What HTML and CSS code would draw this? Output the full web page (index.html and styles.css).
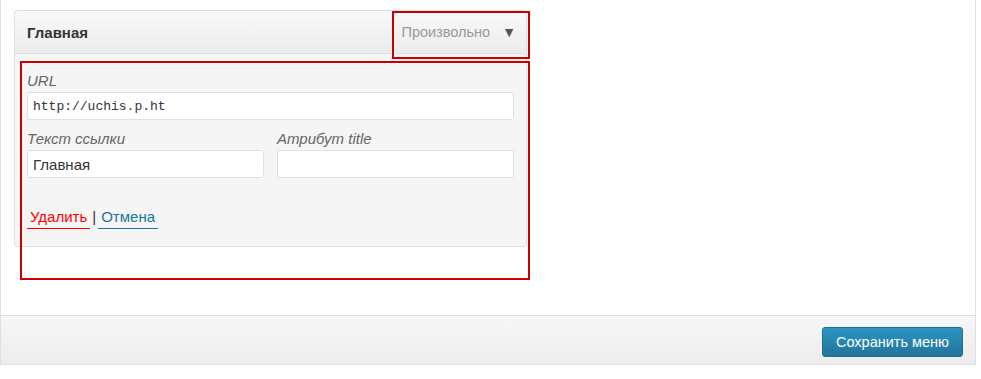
FILE: index.html
```html
<!DOCTYPE html>
<html lang="ru">
<head>
<meta charset="utf-8">
<title>Меню</title>
<link rel="stylesheet" href="styles.css">
</head>
<body>

<div class="menu-frame">
	<div class="menu-body">
		<div class="menu-item">
			<div class="item-bar">
				<span class="item-title">Главная</span>
				<span class="item-controls">
					<span class="item-type">Произвольно</span>
					<span class="item-edit">&#9660;</span>
				</span>
			</div>
			<div class="item-settings">
				<label class="field">
					<span class="field-label">URL</span>
					<input class="field-input field-code" type="text" value="http://uchis.p.ht">
				</label>
				<div class="field-row">
					<label class="field">
						<span class="field-label">Текст ссылки</span>
						<input class="field-input" type="text" value="Главная">
					</label>
					<label class="field">
						<span class="field-label">Атрибут title</span>
						<input class="field-input" type="text" value="">
					</label>
				</div>
				<div class="item-actions">
					<a class="action action-delete" href="#">Удалить</a><span class="sep">|</span><a class="action action-cancel" href="#">Отмена</a>
				</div>
			</div>
		</div>
		<span class="mark mark-type"></span>
		<span class="mark mark-settings"></span>
	</div>
	<div class="menu-footer">
		<button class="button-primary" type="button">Сохранить меню</button>
	</div>
</div>

</body>
</html>
```

FILE: styles.css
```css
body {
	margin:0;
	background:#fff;
	font-family:"Liberation Sans", Arial, sans-serif;
	font-size:15px;
	color:#333;
}

.menu-frame {
	width:976px;
	box-sizing:border-box;
	border:1px solid #dfdfdf;
	border-top:0;
}
.menu-body {
	position:relative;
	padding:10px 13px 68px;
}

/* пункт меню */
.menu-item {
	width:513px;
	box-sizing:border-box;
	border:1px solid #dfdfdf;
	border-radius:3px;
	background:#f5f5f5;
}
.item-bar {
	display:flex;
	align-items:center;
	justify-content:space-between;
	height:42px;
	padding:0 10px 0 12px;
	border-bottom:1px solid #dfdfdf;
	border-radius:3px 3px 0 0;
	background:linear-gradient(to bottom, #f9f9f9, #ececec);
}
.item-title {
	font-weight:bold;
	font-size:15px;
	color:#333;
}
.item-controls {
	display:flex;
	align-items:center;
	gap:12px;
}
.item-type {
	font-size:14.5px;
	color:#999;
}
.item-edit {
	font-size:14px;
	color:#555;
}

.item-settings {
	display:flex;
	flex-direction:column;
	padding:18px 12px 20px;
}
.field {
	display:flex;
	flex-direction:column;
	gap:2px;
	flex:1;
}
.field-row {
	display:flex;
	gap:13px;
	margin-top:10px;
}
.field-label {
	font-style:italic;
	color:#666;
	line-height:18px;
}
.field-input {
	height:28px;
	box-sizing:border-box;
	margin:0;
	padding:0 5px;
	border:1px solid #dfdfdf;
	border-radius:3px;
	background:#fff;
	font-family:"Liberation Sans", Arial, sans-serif;
	font-size:15px;
	color:#333;
}
.field-code {
	font-family:"Liberation Mono", "DejaVu Sans Mono", monospace;
	font-size:13px;
}

.item-actions {
	margin-top:30px;
	line-height:18px;
}
.action {
	padding:0 3px 3px;
	text-decoration:none;
	border-bottom:1px solid;
}
.action-delete { color:#f00; border-color:#f00; }
.action-cancel { color:#21759b; border-color:#21759b; }
.sep {
	margin:0 2px;
	color:#333;
}

/* выделение на скриншоте */
.mark {
	position:absolute;
	box-sizing:border-box;
	border:2px solid #c00;
}
.mark-type { left:391px; top:11px; width:138px; height:48px; }
.mark-settings { left:19px; top:61px; width:510px; height:219px; }

.menu-footer {
	display:flex;
	justify-content:flex-end;
	height:49px;
	box-sizing:border-box;
	padding:11px 12px 0;
	border-top:1px solid #dfdfdf;
	background:linear-gradient(to bottom, #f7f7f7, #ececec);
}
.button-primary {
	height:30px;
	padding:0 13px;
	border:1px solid #1f6d91;
	border-radius:3px;
	background:linear-gradient(to bottom, #2a95c5, #21759b);
	color:#fff;
	font-family:"Liberation Sans", Arial, sans-serif;
	font-size:14.5px;
}
```
